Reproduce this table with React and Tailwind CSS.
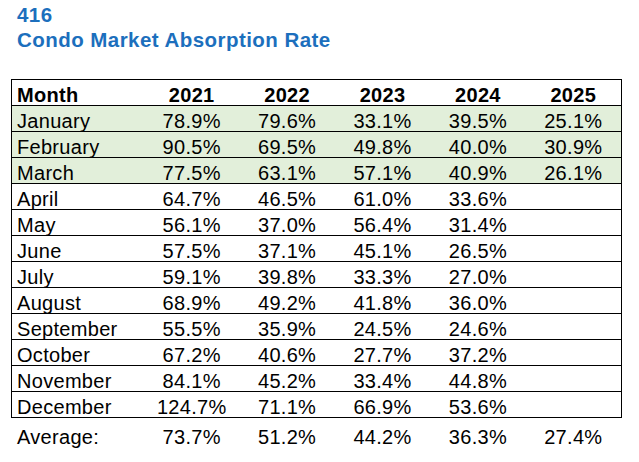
import React from "react";

const years = ["2021", "2022", "2023", "2024", "2025"];

const rows = [
  ["January", "78.9%", "79.6%", "33.1%", "39.5%", "25.1%"],
  ["February", "90.5%", "69.5%", "49.8%", "40.0%", "30.9%"],
  ["March", "77.5%", "63.1%", "57.1%", "40.9%", "26.1%"],
  ["April", "64.7%", "46.5%", "61.0%", "33.6%", ""],
  ["May", "56.1%", "37.0%", "56.4%", "31.4%", ""],
  ["June", "57.5%", "37.1%", "45.1%", "26.5%", ""],
  ["July", "59.1%", "39.8%", "33.3%", "27.0%", ""],
  ["August", "68.9%", "49.2%", "41.8%", "36.0%", ""],
  ["September", "55.5%", "35.9%", "24.5%", "24.6%", ""],
  ["October", "67.2%", "40.6%", "27.7%", "37.2%", ""],
  ["November", "84.1%", "45.2%", "33.4%", "44.8%", ""],
  ["December", "124.7%", "71.1%", "66.9%", "53.6%", ""],
];

const averages = ["73.7%", "51.2%", "44.2%", "36.3%", "27.4%"];

const grid = "grid grid-cols-[132px_repeat(5,1fr)] items-center";

export default function App() {
  return (
    <div className="w-[639px] h-[462px] bg-white text-black font-['Liberation_Sans',Arial,sans-serif] overflow-hidden">
      {/* title */}
      <div className="pt-[2px] pl-[17px] text-[20.5px] leading-[25px] font-bold text-[#1c6fbd] tracking-[0.45px]">
        <div>416</div>
        <div>Condo Market Absorption Rate</div>
      </div>

      <div className="mt-[27px] ml-[11px] w-[611px] text-[20px] tracking-[0.3px]">
        <div className="border border-black">
          {/* header */}
          <div className={`${grid} h-[26px] pb-[3px] border-b border-black font-bold`}>
            <div className="pl-[5px]">Month</div>
            {years.map((y) => (
              <div key={y} className="text-center">{y}</div>
            ))}
          </div>

          {rows.map((r, i) => (
            <div
              key={r[0]}
              className={`${grid} pb-[3px] ${i < 3 ? "bg-[#e2efda]" : ""} ${
                i < rows.length - 1 ? "h-[26px] border-b border-black" : "h-[25px]"
              }`}
            >
              <div className="pl-[5px]">{r[0]}</div>
              {r.slice(1).map((v, j) => (
                <div key={j} className="text-center">{v}</div>
              ))}
            </div>
          ))}
        </div>

        {/* averages, outside the box */}
        <div className={`${grid} h-[38px] px-[1px]`}>
          <div className="pl-[5px]">Average:</div>
          {averages.map((v, j) => (
            <div key={j} className="text-center">{v}</div>
          ))}
        </div>
      </div>
    </div>
  );
}
